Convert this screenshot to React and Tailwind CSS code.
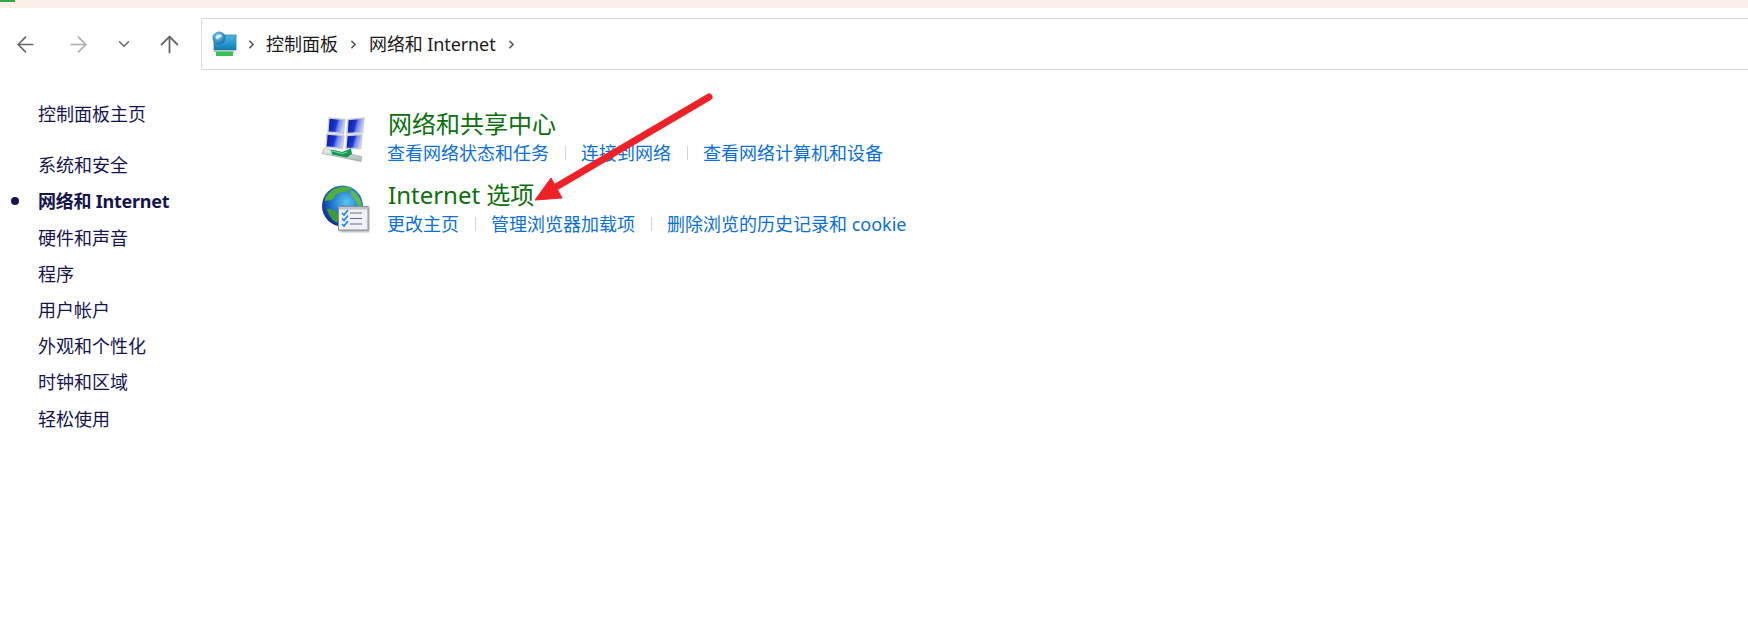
import React from 'react';
import { ArrowLeft, ArrowRight, ArrowUp, ChevronDown, ChevronRight } from 'lucide-react';

const FONT = 'font-["Noto_Sans","Noto_Sans_CJK_SC",sans-serif]';

const sideItems = ['系统和安全', '网络和 Internet', '硬件和声音', '程序', '用户帐户', '外观和个性化', '时钟和区域', '轻松使用'];

const PcIcon = () => (
  <svg width="26" height="26" viewBox="0 0 26 26">
    <defs>
      <linearGradient id="pcScreen" x1="0" y1="0" x2="0" y2="1">
        <stop offset="0" stopColor="#4db6e8" />
        <stop offset="1" stopColor="#0b7fb8" />
      </linearGradient>
      <radialGradient id="pcGlobe" cx="0.4" cy="0.35" r="0.7">
        <stop offset="0" stopColor="#7fd0f0" />
        <stop offset="1" stopColor="#14679c" />
      </radialGradient>
    </defs>
    <rect x="3" y="4" width="22" height="15" fill="url(#pcScreen)" stroke="#2f6f8f" strokeWidth="0.7" />
    <circle cx="8" cy="7" r="6.5" fill="url(#pcGlobe)" />
    <path d="M5 5 C7 3 10 3 11 5 C10 7 8 6 7 8 C6 9 4 7 5 5Z" fill="#d8eef5" />
    <rect x="3" y="20" width="20" height="1" fill="#9ab8a0" />
    <rect x="5" y="21" width="17" height="4" fill="#34c552" />
  </svg>
);

const NetworkIcon = () => (
  <svg width="46" height="46" viewBox="0 0 46 46">
    <defs>
      <linearGradient id="netScreen" x1="0" y1="0" x2="1" y2="0.25">
        <stop offset="0" stopColor="#08149a" />
        <stop offset="0.55" stopColor="#1c38d4" />
        <stop offset="0.68" stopColor="#6f84e8" />
        <stop offset="1" stopColor="#c4ccf6" />
      </linearGradient>
      <linearGradient id="netCable" x1="0" y1="0" x2="0" y2="1">
        <stop offset="0" stopColor="#f2f5f2" />
        <stop offset="1" stopColor="#a8b2ae" />
      </linearGradient>
    </defs>
    {[
      'M7 2 L23 3.5 L21.5 17.5 L6 16 Z',
      'M26 3.5 L42 2 L40.5 16.5 L25 17.5 Z',
      'M5 18 L22 19.5 L20.5 32.5 L4 31 Z',
      'M25 19.5 L40 18.5 L38.5 32.5 L24 32.5 Z',
    ].map((d) => (
      <path key={d} d={d} fill="url(#netScreen)" stroke="#c8ccd2" strokeWidth="1.4" />
    ))}
    <path d="M2 32.5 L40 40.5 L39 45.5 L0 37.5 Z" fill="url(#netCable)" stroke="#98a29e" strokeWidth="0.6" />
    <path d="M9 33.5 L20 36 L29 32.5 L30 38 L25 41.5 L10 38.5 Z" fill="#149a55" />
    <path d="M10 35 L20 37.5 L25 36" fill="none" stroke="#6fdc9a" strokeWidth="1" />
  </svg>
);

const GlobeIcon = () => (
  <svg width="48" height="48" viewBox="0 0 48 48">
    <defs>
      <radialGradient id="globeSea" cx="0.6" cy="0.4" r="0.65">
        <stop offset="0" stopColor="#58c4f0" />
        <stop offset="0.6" stopColor="#1c72c8" />
        <stop offset="1" stopColor="#10288a" />
      </radialGradient>
      <filter id="docShadow" x="-20%" y="-20%" width="140%" height="140%">
        <feGaussianBlur stdDeviation="0.8" />
      </filter>
    </defs>
    <circle cx="20.5" cy="21" r="20.5" fill="url(#globeSea)" />
    <path d="M6 9 C11 2 22 0 29 3 C30 6 25 6 21 7 C16 8 13 9 12 13 C9 16 6 15 3 16 C3 13 4 11 6 9Z" fill="#4fae3c" />
    <path d="M29 5 C35 7 40 15 40 23 C37 23 35 19 33 15 C31 12 28 9 29 5Z" fill="#62b848" />
    <path d="M5 24 C10 23 16 27 17 32 C18 37 14 39 11 35 C8 32 6 28 5 24Z" fill="#3f9a38" />
    <rect x="17.5" y="22" width="30" height="25" fill="#555" opacity="0.5" filter="url(#docShadow)" />
    <rect x="16.5" y="21.5" width="29.5" height="23.5" fill="#f0f1f7" stroke="#8a8d98" />
    <rect x="17" y="22" width="28.5" height="2.5" fill="#bfc3cc" />
    {[28, 33.5, 39].map((y) => (
      <g key={y}>
        <path d={`M20 ${y} l2 2 l4 -5`} fill="none" stroke="#1e88d8" strokeWidth="1.7" />
        <line x1="28" y1={y} x2="40" y2={y} stroke="#6a6a90" strokeWidth="1" />
      </g>
    ))}
  </svg>
);

const Section = ({ icon, iconPad, title, links }) => (
  <div className="flex h-[71px]">
    <div className={`w-[67px] shrink-0 pl-[2px] ${iconPad}`}>{icon}</div>
    <div>
      <div className="h-[30px] flex items-center pl-px text-[24px] text-[#0c6f0c] leading-none">{title}</div>
      <div className="flex items-center gap-[16px] h-[28px] text-[18px] text-[#0a6fd8] leading-none">
        {links.map((link, i) => (
          <React.Fragment key={link}>
            {i > 0 && <span className="w-px h-[14px] bg-[#d4d4d4] -mr-px" />}
            <span className="whitespace-nowrap">{link}</span>
          </React.Fragment>
        ))}
      </div>
    </div>
  </div>
);

export default function App() {
  return (
    <div className={`relative w-[1748px] h-[629px] bg-white overflow-hidden ${FONT}`}>
      {/* taskbar sliver */}
      <div className="h-2 bg-[#f9f1e8]">
        <div className="w-[15px] h-[2px] bg-[#2ea84a]" />
      </div>

      {/* nav + address bar */}
      <div className="flex items-center h-[52px] mt-[10px]">
        <div className="w-[201px] flex items-center shrink-0 pl-[13px]">
          <ArrowLeft size={25} strokeWidth={1.6} className="text-[#666666]" />
          <ArrowRight size={25} strokeWidth={1.6} className="text-[#aaaaaa] ml-[28px]" />
          <ChevronDown size={18} strokeWidth={2} className="text-[#666666] ml-[24px]" />
          <ArrowUp size={27} strokeWidth={1.6} className="text-[#666666] ml-[23px]" />
        </div>
        <div className="flex-1 h-[52px] border border-r-0 border-[#d9d9d9] flex items-center pl-[9px] text-[18px] text-[#1a1a1a]">
          <PcIcon />
          <ChevronRight size={13} strokeWidth={3} className="text-[#555555] ml-[8px] mr-[8px]" />
          <span>控制面板</span>
          <ChevronRight size={13} strokeWidth={3} className="text-[#555555] mx-[9px]" />
          <span className="tracking-[-0.1px]">网络和 Internet</span>
          <ChevronRight size={13} strokeWidth={3} className="text-[#555555] ml-[9px]" />
        </div>
      </div>

      <div className="flex">
        {/* left list */}
        <div className="w-[320px] shrink-0 pl-[38px] pt-[26px] text-[18px] text-[#15144f] leading-[36.2px]">
          <div className="mb-[15px]">控制面板主页</div>
          {sideItems.map((item, i) => (
            <div key={item} className={`relative whitespace-nowrap ${i === 1 ? 'font-bold tracking-[-0.25px]' : ''}`}>
              {i === 1 && <span className="absolute left-[-27px] top-[14px] w-2 h-2 rounded-full bg-[#15144f]" />}
              {item}
            </div>
          ))}
        </div>

        {/* main */}
        <div className="pt-[39px]">
          <Section
            icon={<NetworkIcon />}
            iconPad="pt-[7px]"
            title="网络和共享中心"
            links={['查看网络状态和任务', '连接到网络', '查看网络计算机和设备']}
          />
          <Section
            icon={<GlobeIcon />}
            iconPad="pt-[5px]"
            title="Internet 选项"
            links={['更改主页', '管理浏览器加载项', '删除浏览的历史记录和 cookie']}
          />
        </div>
      </div>

      {/* red annotation arrow */}
      <svg className="absolute left-0 top-0 pointer-events-none" width="1748" height="629">
        <line x1="709" y1="97" x2="556" y2="187" stroke="#ee2129" strokeWidth="7" strokeLinecap="round" />
        <path d="M535 200 L551 178 L562 198 Z" fill="#ee2129" stroke="#ee2129" strokeWidth="1" />
      </svg>
    </div>
  );
}
